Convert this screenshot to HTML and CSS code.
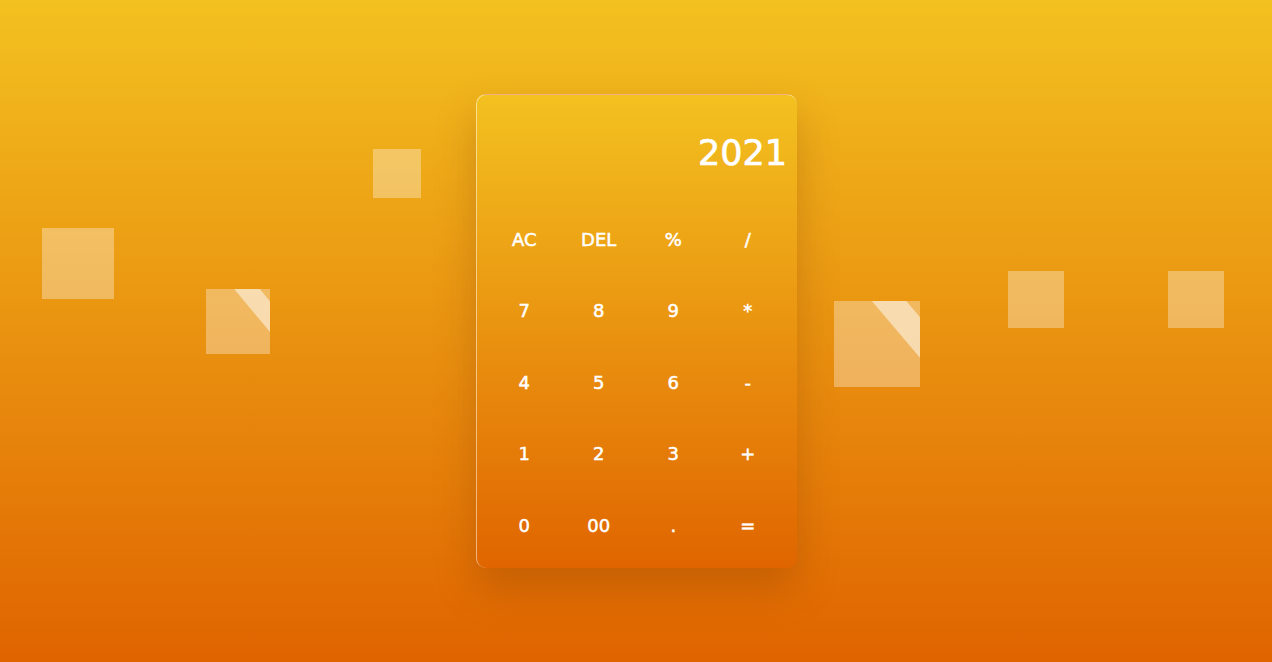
FILE: index.html
```html
<!DOCTYPE html>
<html lang="en">
<head>
<meta charset="utf-8">
<title>Calculator</title>
<link rel="stylesheet" href="styles.css">
</head>
<body>
<div class="scene">
  <span class="sq sq1"></span>
  <span class="sq sq2 shine"></span>
  <span class="sq sq3"></span>
  <span class="sq sq4 shine"></span>
  <span class="sq sq5"></span>
  <span class="sq sq6"></span>

  <div class="calc">
    <div class="display">2021</div>
    <div class="keys">
      <button class="key">AC</button>
      <button class="key">DEL</button>
      <button class="key">%</button>
      <button class="key">/</button>
      <button class="key">7</button>
      <button class="key">8</button>
      <button class="key">9</button>
      <button class="key">*</button>
      <button class="key">4</button>
      <button class="key">5</button>
      <button class="key">6</button>
      <button class="key">-</button>
      <button class="key">1</button>
      <button class="key">2</button>
      <button class="key">3</button>
      <button class="key">+</button>
      <button class="key">0</button>
      <button class="key">00</button>
      <button class="key">.</button>
      <button class="key">=</button>
    </div>
  </div>
</div>
</body>
</html>
```
FILE: styles.css
```css
* { box-sizing: border-box; }
html, body { margin: 0; padding: 0; }
body {
  width: 1272px;
  height: 662px;
  overflow: hidden;
  font-family: "DejaVu Sans", Verdana, sans-serif;
  background: linear-gradient(to bottom, #f3c120 0%, #e06400 100%);
}
.scene {
  position: relative;
  width: 100%;
  height: 100%;
  display: flex;
  align-items: center;
  justify-content: center;
}
.sq {
  position: absolute;
  background: rgba(255, 255, 255, 0.33);
  overflow: hidden;
}
.shine::before {
  content: "";
  position: absolute;
  inset: 0;
  background: rgba(255, 255, 255, 0.5);
  clip-path: polygon(44% 0, 84% 0, 100% 19%, 100% 66%);
}
.sq1 { left: 42px; top: 228px; width: 72px; height: 71px; }
.sq2 { left: 206px; top: 289px; width: 64px; height: 65px; }
.sq3 { left: 373px; top: 149px; width: 48px; height: 49px; }
.sq4 { left: 834px; top: 301px; width: 86px; height: 86px; }
.sq5 { left: 1008px; top: 271px; width: 56px; height: 57px; }
.sq6 { left: 1168px; top: 271px; width: 56px; height: 57px; }

.calc {
  position: relative;
  width: 321px;
  height: 474px;
  margin-left: 1px;
  margin-top: -1px;
  border-radius: 10px;
  background: linear-gradient(to bottom, #f3c120 0%, #e06500 100%);
  border-top: 1px solid rgba(255, 255, 255, 0.5);
  border-left: 1px solid rgba(255, 255, 255, 0.5);
  box-shadow: 0 20px 40px rgba(120, 50, 0, 0.28);
  display: flex;
  flex-direction: column;
}
.display {
  height: 109px;
  padding: 33px 10px 0 0;
  text-align: right;
  color: #fff;
  font-size: 35px;
  line-height: 50px;
  -webkit-text-stroke: 0.7px #fff;
}
.keys {
  display: grid;
  grid-template-columns: repeat(4, 74.5px);
  grid-auto-rows: 71.5px;
  padding: 0 10px 0 10px;
}
.key {
  background: transparent;
  border: 0;
  padding: 0;
  color: #fff;
  font-family: "DejaVu Sans", Verdana, sans-serif;
  font-size: 18px;
  font-weight: 400;
  -webkit-text-stroke: 0.5px #fff;
  display: flex;
  align-items: center;
  justify-content: center;
}
```
